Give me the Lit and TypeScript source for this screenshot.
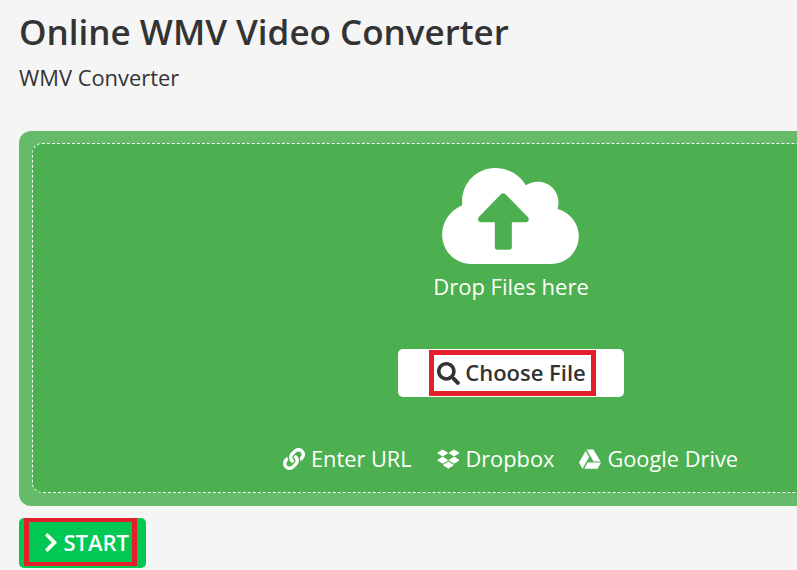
import { LitElement, html, css } from "lit";
import { customElement } from "lit/decorators.js";

@customElement("app-root")
export class AppRoot extends LitElement {
  static styles = css`
    :host {
      display: block;
      width: 797px;
      height: 570px;
      overflow: hidden;
      background: #f5f5f5;
      font-family: "Open Sans", sans-serif;
      color: #333;
      box-sizing: border-box;
      padding: 7px 0 0 19px;
    }
    h1 {
      margin: 0;
      font-size: 35px;
      line-height: 50px;
      font-weight: 600;
      white-space: nowrap;
    }
    .sub {
      margin: 0;
      font-size: 21.9px;
      line-height: 41px;
    }
    .card {
      margin-top: 33px;
      width: 984px;
      height: 375px;
      box-sizing: border-box;
      padding: 12px 13px 13px;
      background: #66bb6a;
      border-radius: 12px;
    }
    .drop {
      box-sizing: border-box;
      height: 350px;
      border: 1px dashed #fff;
      border-radius: 10px;
      background: #4caf50;
      color: #fff;
      display: flex;
      flex-direction: column;
      align-items: center;
      padding-top: 24px;
    }
    .cloud {
      width: 137px;
      height: 96px;
      display: block;
      margin-right: 2px;
    }
    .hint {
      margin-top: 2px;
      font-size: 22px;
      line-height: 40px;
    }
    .choose {
      margin-top: 43px;
      width: 226px;
      height: 48px;
      background: #fff;
      border-radius: 5px;
      display: flex;
      align-items: center;
      justify-content: center;
    }
    .choose-in {
      box-sizing: border-box;
      width: 167px;
      height: 46px;
      margin-left: 2px;
      border: 5px solid #e3202a;
      display: flex;
      align-items: center;
      justify-content: center;
      gap: 5px;
      color: #333;
      font-size: 22px;
      font-weight: 600;
      white-space: nowrap;
    }
    .choose-in span {
      margin-bottom: 2px;
    }
    .choose-in svg {
      width: 23px;
      height: 23px;
      margin-left: -1px;
      fill: #333;
    }
    .sources {
      margin-top: 40px;
      display: flex;
      gap: 26px;
      font-size: 21.8px;
      line-height: 44px;
    }
    .src {
      display: flex;
      align-items: center;
      gap: 6px;
      white-space: nowrap;
    }
    .src svg {
      height: 22px;
      width: auto;
      margin-left: -1px;
      fill: #fff;
    }
    .start {
      margin-top: 12px;
      width: 127px;
      height: 50px;
      box-sizing: border-box;
      padding-left: 5px;
      background: #00c853;
      border-radius: 5px;
    }
    .start-in {
      box-sizing: border-box;
      width: 113px;
      height: 48px;
      border-style: solid;
      border-color: #e3202a;
      border-width: 4px 5px;
      display: flex;
      align-items: center;
      justify-content: flex-end;
      gap: 5px;
      padding-right: 3px;
      color: #fff;
      font-size: 22px;
      font-weight: 600;
    }
    .start-in svg {
      height: 21px;
      width: 14px;
      fill: #fff;
      stroke: #fff;
      stroke-width: 14;
    }
  `;

  render() {
    return html`
      <h1>Online WMV Video Converter</h1>
      <p class="sub">WMV Converter</p>
      <div class="card">
        <div class="drop">
          <svg class="cloud" viewBox="127 85 410 288">
            <path fill="#fff" d="M215 373C166 373 127 334 127 285C127 245 152 212 187 197C187 190 187 190 187 184C187 130 231 85 285 85C325 85 360 105 378 137C389 130 402 126 415 126C449 126 476 154 476 188C476 195 475 202 473 208C510 218 537 251 537 290C537 336 500 373 454 373Z" />
            <path fill="#4caf50" d="M303 164Q310 158 317 164L384 232Q392 245 378 248L336 248L336 322Q336 330 328 330L293 330Q285 330 285 322L285 248L244 248Q230 245 237 232Z" />
          </svg>
          <div class="hint">Drop Files here</div>
          <div class="choose">
            <div class="choose-in">
              <svg viewBox="0 0 512 512"><path d="M505 442.7L405.3 343c-4.5-4.5-10.6-7-17-7H372c27.6-35.3 44-79.7 44-128C416 93.1 322.9 0 208 0S0 93.1 0 208s93.1 208 208 208c48.3 0 92.7-16.4 128-44v16.3c0 6.4 2.5 12.5 7 17l99.7 99.7c9.4 9.4 24.6 9.4 33.9 0l28.3-28.3c9.4-9.4 9.4-24.6.1-34zM208 336c-70.7 0-128-57.2-128-128 0-70.7 57.2-128 128-128 70.7 0 128 57.2 128 128 0 70.7-57.2 128-128 128z" /></svg>
              <span>Choose File</span>
            </div>
          </div>
          <div class="sources">
            <div class="src">
              <svg viewBox="0 0 512 512"><path d="M326.612 185.391c59.747 59.809 58.927 155.698.36 214.59-.11.12-.24.25-.36.37l-67.2 67.2c-59.27 59.27-155.699 59.262-214.96 0-59.27-59.26-59.27-155.7 0-214.96l37.106-37.106c9.84-9.84 26.786-3.3 27.294 10.606.648 17.722 3.826 35.527 9.69 52.721 1.986 5.822.567 12.262-3.783 16.612l-13.087 13.087c-28.026 28.026-28.905 73.66-1.155 101.96 28.024 28.579 74.086 28.749 102.325.51l67.2-67.19c28.191-28.191 28.073-73.757 0-101.83-3.701-3.694-7.429-6.564-10.341-8.569a16.037 16.037 0 0 1-6.947-12.606c-.396-10.567 3.348-21.456 11.698-29.806l21.054-21.055c5.521-5.521 14.182-6.199 20.584-1.731a152.482 152.482 0 0 1 20.522 17.197zM467.547 44.449c-59.261-59.262-155.69-59.27-214.96 0l-67.2 67.2c-.12.12-.25.25-.36.37-58.566 58.892-59.387 154.781.36 214.59a152.454 152.454 0 0 0 20.521 17.196c6.402 4.468 15.064 3.789 20.584-1.731l21.054-21.055c8.35-8.35 12.094-19.239 11.698-29.806a16.037 16.037 0 0 0-6.947-12.606c-2.912-2.005-6.64-4.875-10.341-8.569-28.073-28.073-28.191-73.639 0-101.83l67.2-67.19c28.239-28.239 74.3-28.069 102.325.51 27.75 28.3 26.872 73.934-1.155 101.96l-13.087 13.087c-4.35 4.35-5.769 10.79-3.783 16.612 5.864 17.194 9.042 34.999 9.69 52.721.509 13.906 17.454 20.446 27.294 10.606l37.106-37.106c59.271-59.259 59.271-155.699.001-214.959z" /></svg>
              <span>Enter URL</span>
            </div>
            <div class="src">
              <svg viewBox="0 0 528 512"><path d="M264.4 116.3l-132 84.3 132 84.3-132 84.3L0 284.1l132.3-84.3L0 116.3 132.3 32l132.1 84.3zM131.6 395.7l132-84.3 132 84.3-132 84.3-132-84.3zm132.8-111.6l132-84.3-132-83.6L395.7 32 528 116.3l-132.3 84.3L528 284.8l-132.3 84.3-131.3-85z" /></svg>
              <span>Dropbox</span>
            </div>
            <div class="src">
              <svg viewBox="0 0 512 512"><path d="M339 314.9L175.4 32h161.2l163.6 282.9H339zm-137.5 23.6L120.9 480h310.5L512 338.5H201.5zM154.1 67.4L0 338.5 80.6 480 237 208.8 154.1 67.4z" /></svg>
              <span>Google Drive</span>
            </div>
          </div>
        </div>
      </div>
      <div class="start">
        <div class="start-in">
          <svg viewBox="0 0 320 512"><path d="M285.476 272.971L91.132 467.314c-9.373 9.373-24.569 9.373-33.941 0l-22.667-22.667c-9.357-9.357-9.375-24.522-.04-33.901L188.505 256 34.484 101.255c-9.335-9.379-9.317-24.544.04-33.901l22.667-22.667c9.373-9.373 24.569-9.373 33.941 0L285.475 239.03c9.373 9.372 9.373 24.568.001 33.941z" /></svg>
          <span>START</span>
        </div>
      </div>
    `;
  }
}
